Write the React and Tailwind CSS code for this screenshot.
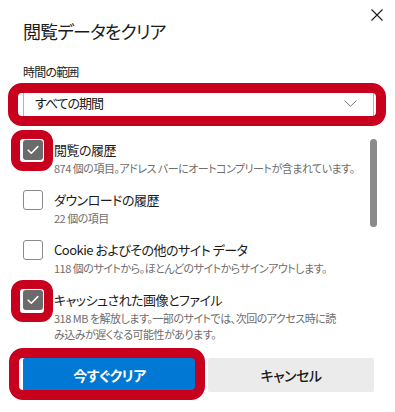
import React from 'react';

const items = [
  { id: 'history', label: '閲覧の履歴', desc: '874 個の項目。アドレス バーにオートコンプリートが含まれています。', checked: true },
  { id: 'downloads', label: 'ダウンロードの履歴', desc: '22 個の項目', checked: false },
  { id: 'cookies', label: 'Cookie およびその他のサイト データ', desc: '118 個のサイトから。ほとんどのサイトからサインアウトします。', checked: false },
  { id: 'cache', label: 'キャッシュされた画像とファイル', desc: '318 MB を解放します。一部のサイトでは、次回のアクセス時に読\nみ込みが遅くなる可能性があります。', checked: true },
];

function Checkbox({ checked }) {
  if (checked) {
    return (
      <div className="w-5 h-5 shrink-0 rounded-[3px] bg-[#6b6b6b] flex items-center justify-center">
        <svg width="12" height="10" viewBox="0 0 12 10" fill="none">
          <path d="M1.2 5.2 L4.3 8.2 L10.8 1.6" stroke="#fff" strokeWidth="1.6" strokeLinecap="round" strokeLinejoin="round" />
        </svg>
      </div>
    );
  }
  return <div className="w-5 h-5 shrink-0 rounded-[3px] border border-[#8a8a8a] bg-white" />;
}

export default function App() {
  return (
    <div className="relative w-[395px] h-[412px] overflow-hidden bg-white text-[#1b1b1b] font-['Noto_Sans_CJK_JP','Noto_Sans',sans-serif] [font-feature-settings:'palt']">
      <button className="absolute top-[8px] right-[11px] w-[14px] h-[14px] flex items-center justify-center">
        <svg width="12" height="12" viewBox="0 0 12 12">
          <path d="M0.5 0.5 L11.5 11.5 M11.5 0.5 L0.5 11.5" stroke="#1b1b1b" strokeWidth="1.1" />
        </svg>
      </button>

      <div className="pl-[23px] pr-[21px] pt-[17px]">
        <h1 className="text-[18px] leading-[28px] font-normal tracking-[-0.9px]">閲覧データをクリア</h1>

        <div className="mt-[19px] text-[12px] leading-[16px] tracking-[-0.8px]">時間の範囲</div>

        <div className="mt-[6px] h-[34px] border border-[#b3b3b3] rounded-[2px] flex items-center justify-between pl-[11px] pr-[16px]">
          <span className="text-[13px] tracking-[-1px]">すべての期間</span>
          <svg width="13" height="7" viewBox="0 0 13 7" fill="none">
            <path d="M0.5 0.5 L6.5 6.3 L12.5 0.5" stroke="#777" strokeWidth="1" />
          </svg>
        </div>

        <div className="mt-[20px] flex">
          <div className="flex-1 flex flex-col gap-[14px]">
            {items.map(it => (
              <div key={it.id} className="flex gap-[11px]">
                <Checkbox checked={it.checked} />
                <div className="min-w-0 pr-[6px]">
                  <div className="text-[13px] leading-[20px] tracking-[-0.5px]">{it.label}</div>
                  <div className="text-[11px] leading-[16px] tracking-[-0.5px] text-[#6e6e6e] whitespace-pre-line">{it.desc}</div>
                </div>
              </div>
            ))}
          </div>
          <div className="w-[7px] -mr-[3px]">
            <div className="mt-[-1px] h-[88px] rounded-full bg-[#8a8a8a]" />
          </div>
        </div>

        <div className="mt-[16px] flex gap-[12px]">
          <button className="w-[173px] h-[34px] rounded-[2px] bg-[#0078d4] text-white text-[14px] font-bold tracking-[-0.5px]">今すぐクリア</button>
          <button className="w-[166px] h-[34px] rounded-[2px] bg-[#ebebeb] text-[#1b1b1b] text-[14px] font-medium tracking-[-0.5px]">キャンセル</button>
        </div>
      </div>

      {/* red annotation rings */}
      <div className="absolute left-[8px] top-[83px] w-[378px] h-[43px] border-[10px] border-[#c8001e] rounded-[14px] pointer-events-none" />
      <div className="absolute left-[11px] top-[130px] w-[42px] h-[41px] border-[9px] border-[#c8001e] rounded-[12px] pointer-events-none" />
      <div className="absolute left-[11px] top-[280px] w-[42px] h-[42px] border-[9px] border-[#c8001e] rounded-[12px] pointer-events-none" />
      <div className="absolute left-[9px] top-[348px] w-[196px] h-[52px] border-[10px] border-[#c8001e] rounded-[14px] pointer-events-none" />
    </div>
  );
}
